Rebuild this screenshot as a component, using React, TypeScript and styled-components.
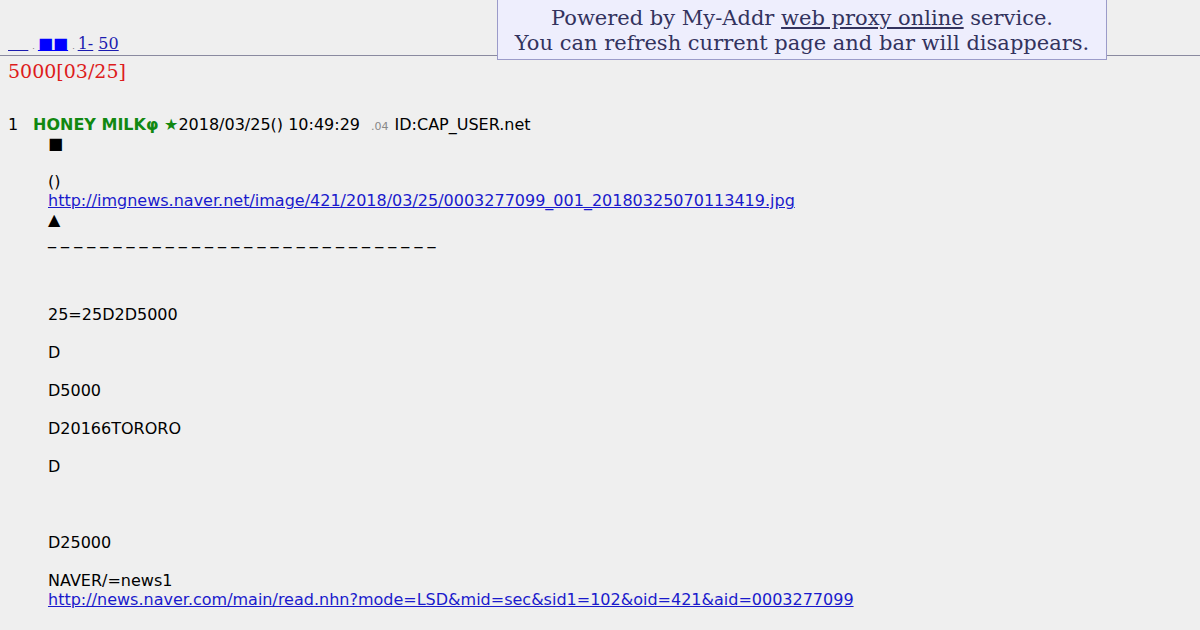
import React from 'react'
import styled, { createGlobalStyle } from 'styled-components'

const GlobalStyle = createGlobalStyle`
  html, body {
    margin: 0;
    padding: 0;
    background: #efefef;
  }
  body {
    padding: 8px;
    font-family: "DejaVu Sans", "Liberation Sans", sans-serif;
    font-size: 16px;
    color: #000;
  }
`

const lines: { text?: string; href?: string }[] = [
  { text: '■' },
  {},
  { text: '()' },
  { href: 'http://imgnews.naver.net/image/421/2018/03/25/0003277099_001_20180325070113419.jpg' },
  { text: '▲' },
  { text: Array(30).fill('_').join(' ') },
  {},
  {},
  {},
  { text: '25=25D2D5000' },
  {},
  { text: 'D' },
  {},
  { text: 'D5000' },
  {},
  { text: 'D20166TORORO' },
  {},
  { text: 'D' },
  {},
  {},
  {},
  { text: 'D25000' },
  {},
  { text: 'NAVER/=news1' },
  { href: 'http://news.naver.com/main/read.nhn?mode=LSD&mid=sec&sid1=102&oid=421&aid=0003277099' },
]

const App: React.FC = () => {
  return (
    <>
      <GlobalStyle />
      <ProxyBar>
        Powered by My-Addr <ProxyLink href="#">web proxy online</ProxyLink> service.
        <br />
        You can refresh current page and bar will disappears.
      </ProxyBar>

      <StyledNav>
        <NavLink href="#">{'\u00a0\u00a0\u00a0\u00a0'}</NavLink>
        <NavDot>.</NavDot>
        <NavLink href="#" bright>■■</NavLink>
        <NavDot>.</NavDot>
        <NavLink href="#">1-</NavLink>{' '}
        <NavLink href="#">50</NavLink>
      </StyledNav>
      <StyledRule />

      <StyledTitle>5000[03/25]</StyledTitle>

      <StyledThread>
        <StyledPostHd>
          <StyledNum>1</StyledNum>
          <StyledName>HONEY MILKφ ★</StyledName>
          <span>2018/03/25() 10:49:29</span>
          <StyledMs>.04</StyledMs>
          <span>ID:CAP_USER.net</span>
        </StyledPostHd>
        <StyledPostBd>
          {lines.map((l, i) => (
            <StyledLine key={i}>
              {l.href ? <BodyLink href="#">{l.href}</BodyLink> : l.text || '\u00a0'}
            </StyledLine>
          ))}
        </StyledPostBd>
      </StyledThread>
    </>
  )
}

const ProxyBar = styled.div`
  position: absolute;
  top: 0;
  left: 497px;
  width: 608px;
  height: 53px;
  box-sizing: content-box;
  background: #eeeefd;
  border: 1px solid #9b9bc9;
  border-top: none;
  padding-top: 6px;
  text-align: center;
  font-family: "DejaVu Serif", "Liberation Serif", serif;
  font-size: 21px;
  line-height: 25px;
  color: #33335e;
`

const ProxyLink = styled.a`
  color: #33335e;
  text-decoration: underline;
`

const StyledNav = styled.div`
  margin-top: 26px;
  font-family: "DejaVu Serif", "Liberation Serif", serif;
  font-size: 16px;
  line-height: 19px;
  white-space: pre;
`

const NavLink = styled.a<{ bright?: boolean }>`
  color: ${(p) => (p.bright ? '#0000ff' : '#1c1cb0')};
  text-decoration: underline;
`

const NavDot = styled.span`
  color: #555;
  font-size: 8px;
  padding: 0 3px 0 4px;
`

const StyledRule = styled.div`
  margin: -1px -8px 0;
  height: 1px;
  background: #8a8aa0;
`

const StyledTitle = styled.div`
  margin-top: 4px;
  font-family: "DejaVu Serif", "Liberation Serif", serif;
  font-size: 19px;
  line-height: 22px;
  color: #dd1c1c;
`

const StyledThread = styled.div`
  margin-top: 36px;
`

const StyledPostHd = styled.div`
  display: flex;
  align-items: baseline;
  line-height: 13px;
`

const StyledNum = styled.span`
  width: 25px;
`

const StyledName = styled.span`
  color: #118811;
  font-weight: bold;
`

const StyledMs = styled.span`
  color: #888;
  font-size: 11px;
  margin: 0 6px 0 11px;
`

const StyledPostBd = styled.div`
  margin-left: 40px;
  margin-top: 1px;
`

const StyledLine = styled.div`
  line-height: 19px;
  white-space: pre;
`

const BodyLink = styled.a`
  color: #1a1acc;
  text-decoration: underline;
`

export default App
